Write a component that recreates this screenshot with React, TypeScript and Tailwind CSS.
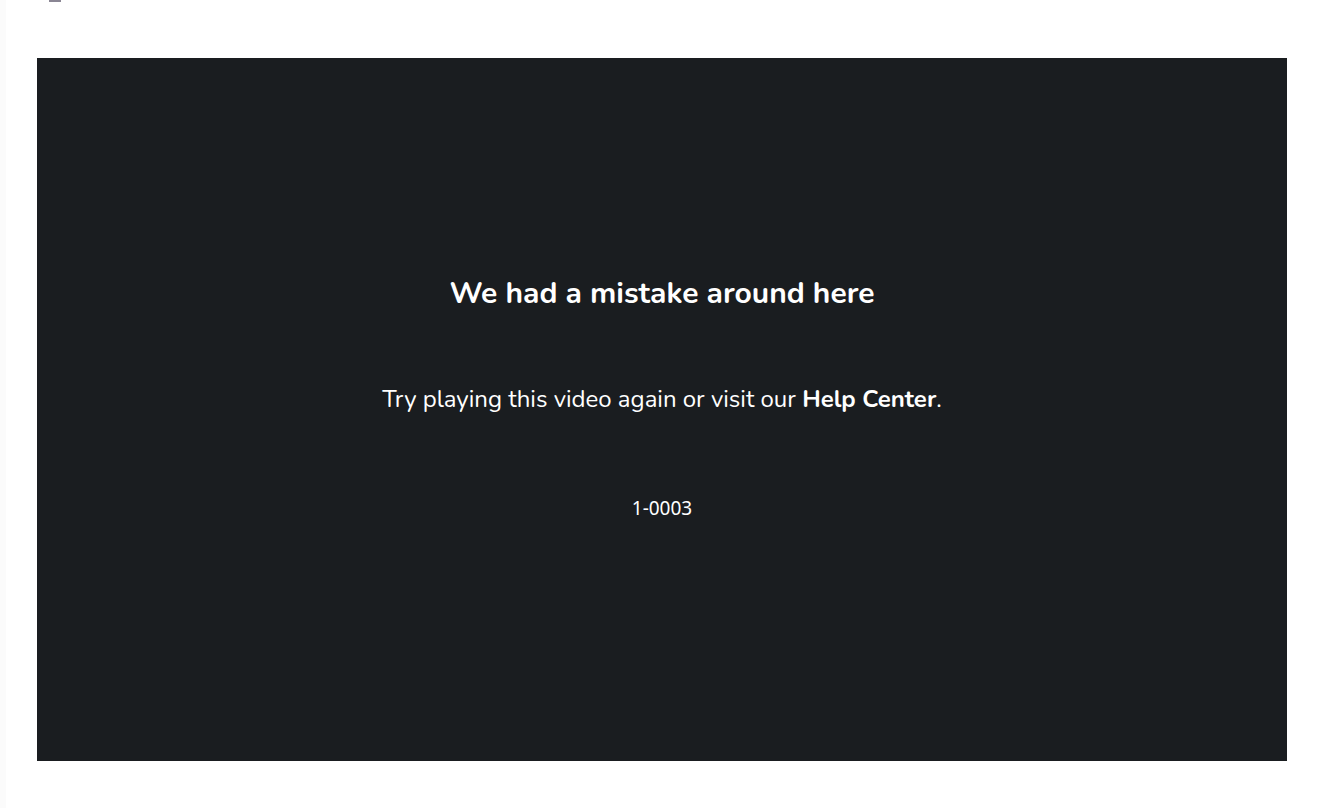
export default function App() {
  return (
    <div className="relative min-h-[808px] w-full bg-white font-['Nunito','Lato','Open_Sans',sans-serif]">
      {/* faint left edge and top marker */}
      <div className="absolute left-0 top-0 h-full w-[6px] bg-[#fbfbfb]" />
      <div className="absolute left-[49px] top-0 h-[2px] w-[12px] bg-[#8a8694]" />

      <div className="pt-[58px] pl-[37px] pr-[40px]">
        <div className="flex h-[703px] w-[1250px] flex-col items-center bg-[#1a1d20] text-white">
          <h1 className="mt-[216px] text-[30px] font-bold leading-[40px]">
            We had a mistake around here
          </h1>
          <p className="mt-[69px] text-[24px] leading-[32px]">
            Try playing this video again or visit our <span className="font-bold">Help Center</span>.
          </p>
          <p className="mt-[80px] font-['Noto_Sans',sans-serif] text-[19px] leading-[26px]">1-0003</p>
        </div>
      </div>
    </div>
  );
}
